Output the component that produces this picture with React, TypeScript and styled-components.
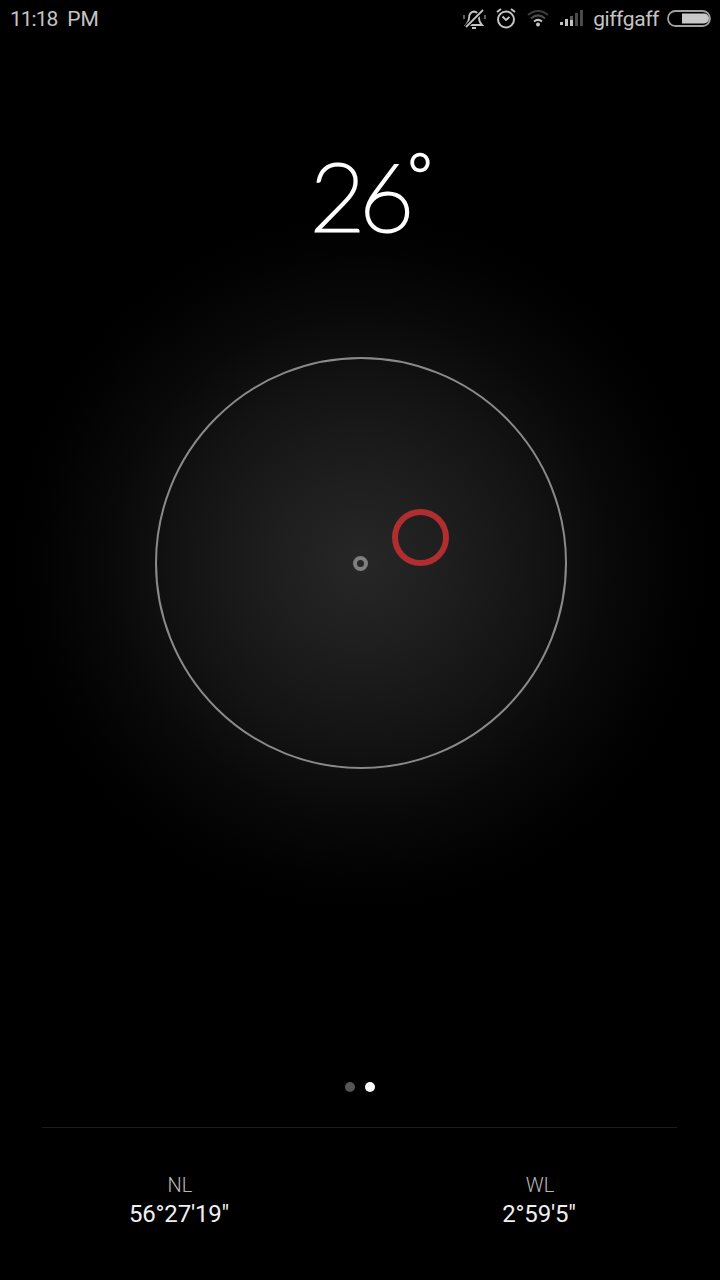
import React from 'react';
import styled, { createGlobalStyle } from 'styled-components';

const GlobalStyle = createGlobalStyle`
  html, body {
    margin: 0;
    padding: 0;
    background: #000;
  }
`;

const Screen = styled.div`
  width: 720px;
  height: 1280px;
  overflow: hidden;
  display: flex;
  flex-direction: column;
  font-family: Roboto, 'Liberation Sans', sans-serif;
  background: radial-gradient(
    circle 345px at 360.5px 563.5px,
    #272727 0,
    #1e1e1e 25%,
    #141414 50%,
    #090909 72%,
    #020202 92%,
    #000 100%
  );
`;

const StatusBar = styled.div`
  height: 38px;
  display: flex;
  align-items: center;
  justify-content: space-between;
  padding: 0 8px 0 10px;
  color: #c4c4c4;
  font-size: 21px;
`;

const Clock = styled.span`
  display: flex;
  gap: 10px;
`;

const ClockTime = styled.span`
  letter-spacing: -1px;
`;

const StatusIcons = styled.div`
  display: flex;
  align-items: center;
  gap: 9px;
`;

const Carrier = styled.span`
  margin-right: -2px;
  font-size: 21px;
  letter-spacing: -0.4px;
`;

const Temperature = styled.div`
  margin-top: 98px;
  height: 120px;
  display: flex;
  justify-content: center;
  color: #fff;
  font-family: Lato, Roboto, sans-serif;
  font-weight: 100;
  -webkit-text-stroke: 3px #fff;
`;

const Digits = styled.span`
  margin-left: -2px;
  font-size: 95px;
  line-height: 117px;
  letter-spacing: -6px;
`;

const Degree = styled.span`
  width: 0;
  font-size: 58px;
  line-height: 76px;
`;

const Dial = styled.div`
  position: relative;
  align-self: flex-start;
  margin: 101px 0 0 155px;
  width: 412px;
  height: 412px;
  box-sizing: border-box;
  border: 2px solid #8a8a8a;
  border-radius: 50%;
`;

const Bubble = styled.div`
  position: absolute;
  left: 235px;
  top: 150px;
  width: 57px;
  height: 57px;
  box-sizing: border-box;
  border: 6px solid #b02e30;
  border-radius: 50%;
`;

const CenterMark = styled.div`
  position: absolute;
  left: 196px;
  top: 197px;
  width: 15px;
  height: 15px;
  box-sizing: border-box;
  border: 4px solid #7f7f7f;
  border-radius: 50%;
`;

const Pager = styled.div`
  margin-top: 313px;
  display: flex;
  justify-content: center;
  gap: 10px;
`;

const Dot = styled.span<{ $active?: boolean }>`
  width: 10px;
  height: 10px;
  border-radius: 50%;
  background: ${(props) => (props.$active ? '#fff' : '#555')};
`;

const Divider = styled.div`
  margin: 35px 43px 0 42px;
  height: 1px;
  background: #1c1c1c;
`;

const Coordinates = styled.div`
  display: grid;
  grid-template-columns: 1fr 1fr;
  margin-top: 45px;
`;

const Coordinate = styled.div`
  display: flex;
  flex-direction: column;
  align-items: center;
`;

const CoordinateLabel = styled.span`
  color: #b8b8b8;
  font-size: 20px;
  font-weight: 300;
  line-height: 24px;
`;

const CoordinateValue = styled.span`
  margin-right: 2px;
  color: #f0f0f0;
  font-size: 24px;
  line-height: 34px;
  letter-spacing: -0.2px;
`;

function MuteIcon() {
  return (
    <svg width="24" height="24" viewBox="0 0 24 24" fill="none" stroke="#c4c4c4" strokeWidth="1.8">
      <path d="M4 18c1.500-1.500 3-3 3-7 0-3.500 2-6 5-6.500 3 .5 5 3 5 6.500 0 4 1.500 5.500 3 7z" />
      <path d="M10 21h4" strokeWidth="2" />
      <path d="M4 20 21 3" stroke="#000" strokeWidth="4" />
      <path d="M4 20 21 3" />
      <path d="M2 8v4M23 8v4" stroke="#6a6a6a" />
    </svg>
  );
}

function AlarmIcon() {
  return (
    <svg width="22" height="24" viewBox="0 0 22 24" fill="none" stroke="#c4c4c4" strokeWidth="2">
      <circle cx="11" cy="12.500" r="8" />
      <path d="M7.500 9.500 11 13l3.500-3" />
      <path d="M2 5l4-3M20 5l-4-3" />
    </svg>
  );
}

function WifiIcon() {
  return (
    <svg width="24" height="24" viewBox="0 0 24 24" fill="none" strokeWidth="2">
      <path d="M2 8c6-5.500 14-5.500 20 0" stroke="#3c3c3c" />
      <path d="M5 11.500c4.500-4 9.500-4 14 0" stroke="#4e4e4e" />
      <path d="M8 14.500c2.500-2 5.500-2 8 0" stroke="#c4c4c4" />
      <circle cx="12" cy="17.500" r="2" fill="#c4c4c4" />
    </svg>
  );
}

function SignalIcon() {
  return (
    <svg width="25" height="24" viewBox="0 0 25 24">
      <rect x="1" y="15" width="3" height="3" fill="#c4c4c4" />
      <rect x="6" y="12" width="3" height="7" fill="#c4c4c4" />
      <rect x="11" y="9" width="3" height="10" fill="#5a5a5a" />
      <rect x="11" y="13" width="3" height="6" fill="#c4c4c4" />
      <rect x="16" y="6" width="3" height="13" fill="#4a4a4a" />
      <rect x="21" y="3" width="3" height="16" fill="#4a4a4a" />
    </svg>
  );
}

function BatteryIcon() {
  return (
    <svg width="46" height="24" viewBox="0 0 46 24">
      <rect x="2" y="4" width="42" height="15" rx="7.500" fill="none" stroke="#a0a0a0" strokeWidth="1.800" />
      <path d="M16 6.500h22a5 5 0 0 1 0 10H16z" fill="#c8c8c8" />
    </svg>
  );
}

export default function App() {
  return (
    <Screen>
      <GlobalStyle />
      <StatusBar>
        <Clock>
          <ClockTime>11:18</ClockTime>
          <span>PM</span>
        </Clock>
        <StatusIcons>
          <MuteIcon />
          <AlarmIcon />
          <WifiIcon />
          <SignalIcon />
          <Carrier>giffgaff</Carrier>
          <BatteryIcon />
        </StatusIcons>
      </StatusBar>
      <Temperature>
        <Digits>26</Digits>
        <Degree>°</Degree>
      </Temperature>
      <Dial>
        <Bubble />
        <CenterMark />
      </Dial>
      <Pager>
        <Dot />
        <Dot $active />
      </Pager>
      <Divider />
      <Coordinates>
        <Coordinate>
          <CoordinateLabel>NL</CoordinateLabel>
          <CoordinateValue>56°27'19"</CoordinateValue>
        </Coordinate>
        <Coordinate>
          <CoordinateLabel>WL</CoordinateLabel>
          <CoordinateValue>2°59'5"</CoordinateValue>
        </Coordinate>
      </Coordinates>
    </Screen>
  );
}
